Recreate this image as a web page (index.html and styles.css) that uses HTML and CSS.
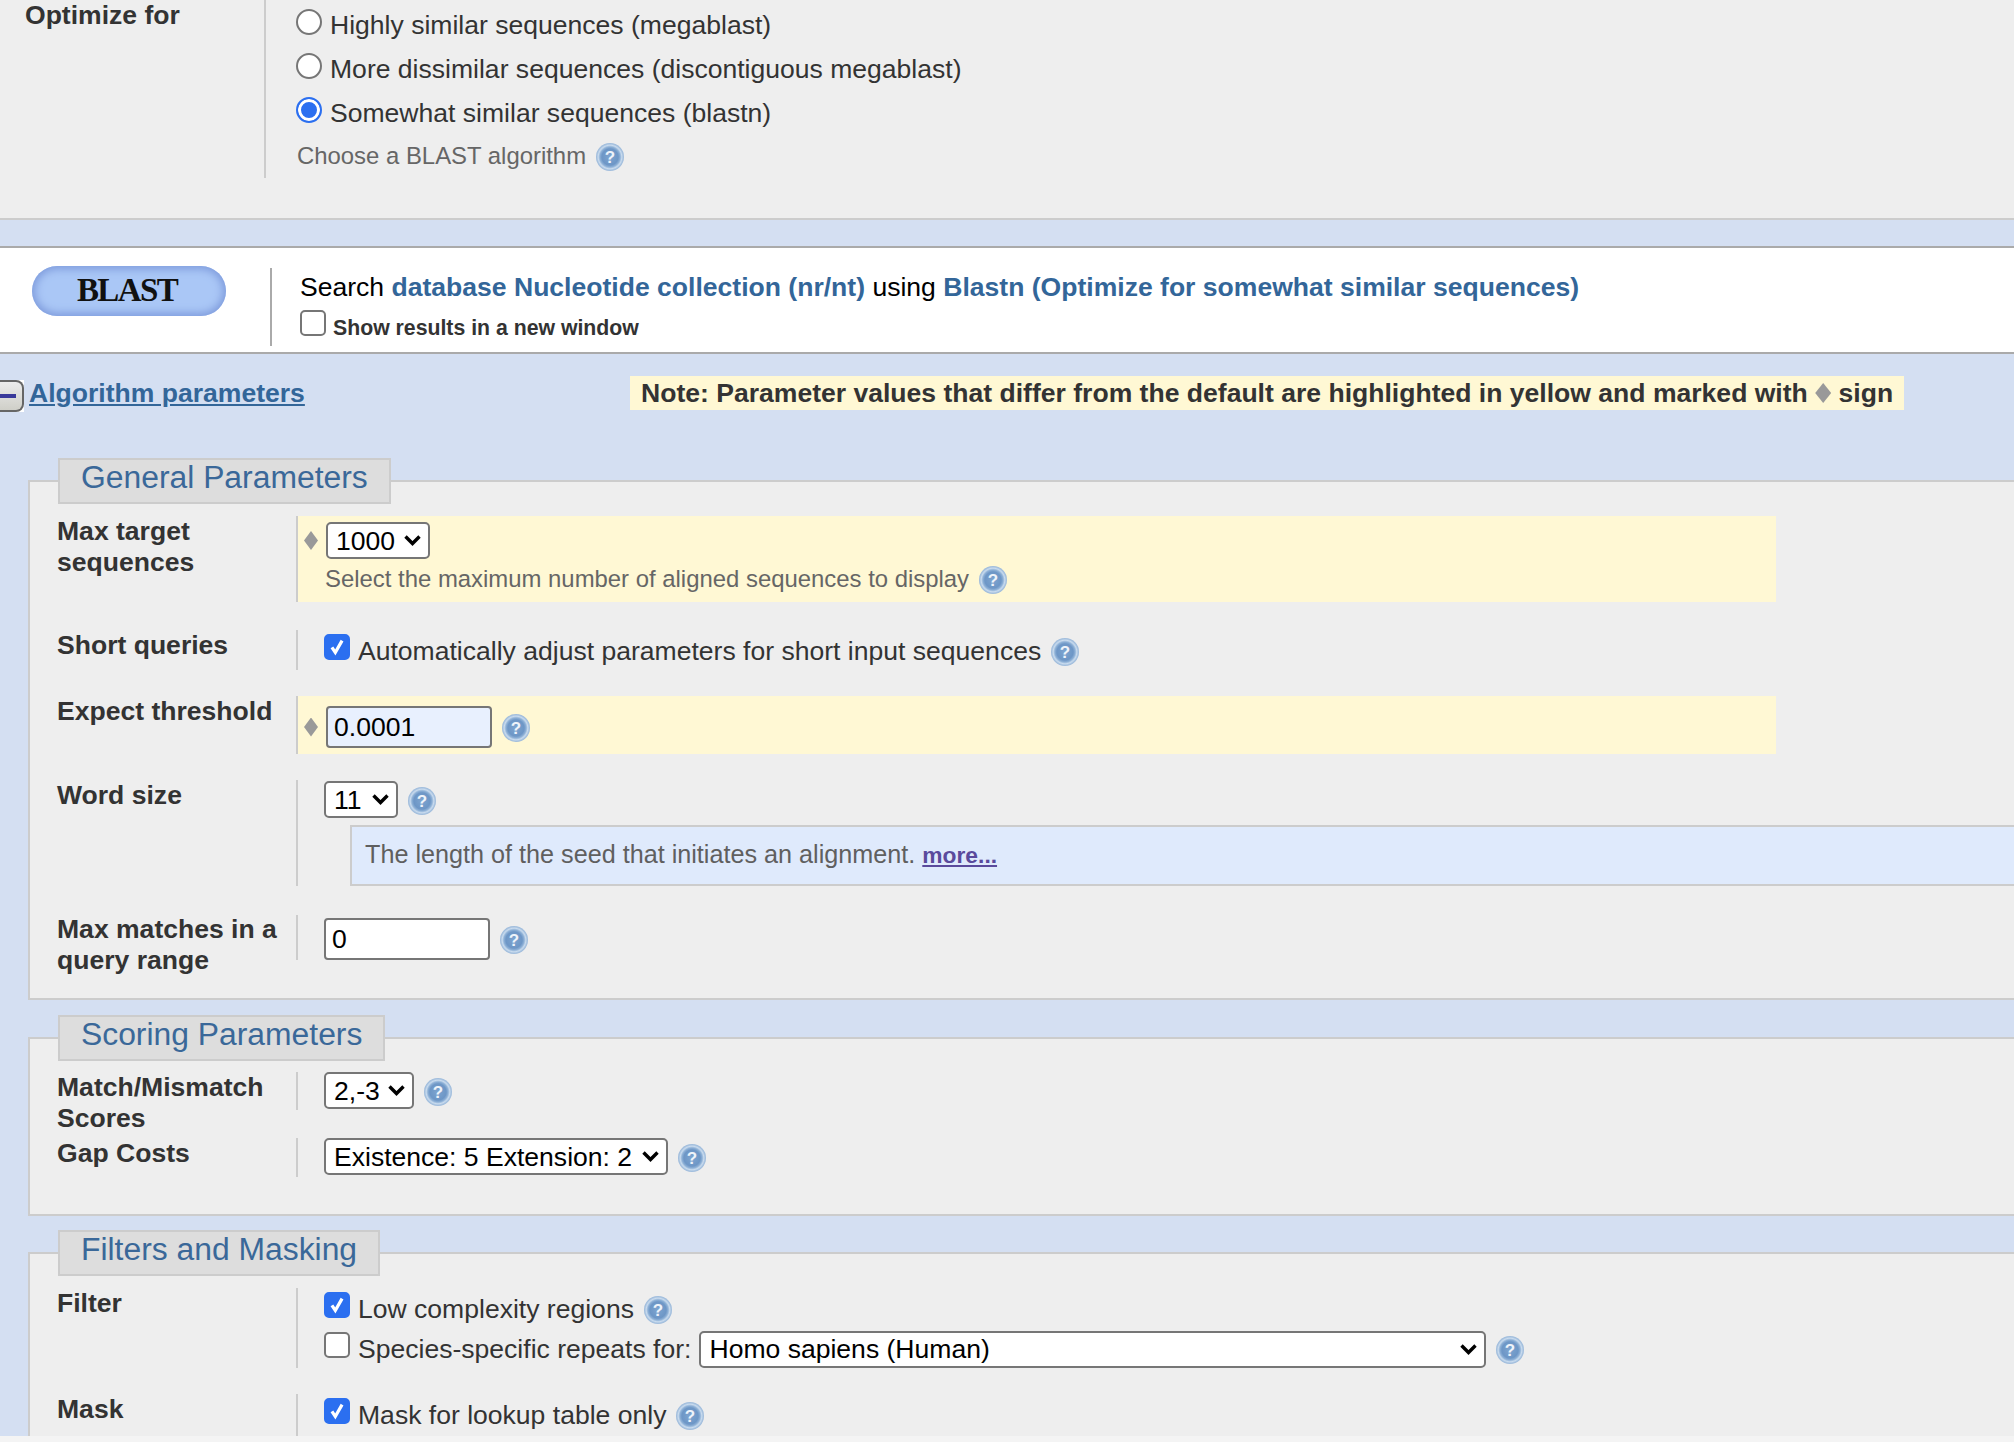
FILE: index.html
```html
<!DOCTYPE html>
<html lang="en">
  <head>
    <meta charset="UTF-8" />
    <title>Standard Nucleotide BLAST</title>
    <link rel="stylesheet" href="styles.css">
  </head>
  <body>
    <svg class="defs" width="0" height="0">
      <defs>
        <radialGradient id="helpFill" cx="50%" cy="50%" r="50%">
          <stop offset="0%" stop-color="#7ea5d0" />
          <stop offset="58%" stop-color="#6d96c6" />
          <stop offset="72%" stop-color="#8db0d6" />
          <stop offset="84%" stop-color="#c9dbee" />
          <stop offset="93%" stop-color="#a8c3e0" />
          <stop offset="100%" stop-color="#9ab8da" />
        </radialGradient>
        <symbol id="help" viewBox="0 0 28 28">
          <circle cx="14" cy="14" r="14" fill="url(#helpFill)" />
          <text x="14" y="20" text-anchor="middle" class="help-mark">?</text>
        </symbol>
      </defs>
    </svg>

    <!-- Program selection -->
    <section class="optimize">
      <div class="opt-label">Optimize for</div>
      <div class="opt-values">
        <label class="radio-line"><input type="radio" name="algo" /> Highly similar sequences (megablast)</label>
        <label class="radio-line"><input type="radio" name="algo" /> More dissimilar sequences (discontiguous megablast)</label>
        <label class="radio-line"><input type="radio" name="algo" checked /> Somewhat similar sequences (blastn)</label>
        <div class="hint opt-hint">Choose a BLAST algorithm <svg class="help"><use href="#help" /></svg></div>
      </div>
    </section>

    <div class="gap-band"></div>

    <!-- Submit bar -->
    <section class="submit-bar">
      <div class="blast-cell"><button class="blast-btn" type="button">BLAST</button></div>
      <div class="submit-text">
        <div class="search-line">Search <b class="blue">database Nucleotide collection (nr/nt)</b> using <b class="blue">Blastn (Optimize for somewhat similar sequences)</b></div>
        <label class="new-window"><input type="checkbox" /> <b>Show results in a new window</b></label>
      </div>
    </section>

    <main class="params">
      <div class="params-head">
        <span class="collapse"><span class="collapse-box"><span class="collapse-bar"></span></span></span>
        <a class="algo-link" href="#">Algorithm parameters</a>
        <div class="note">Note: Parameter values that differ from the default are highlighted in yellow and marked with <span class="diamond"></span> sign</div>
      </div>

      <fieldset class="group group-general">
        <legend>General Parameters</legend>

        <div class="row row-target">
          <div class="row-label">Max target sequences</div>
          <div class="row-value changed">
            <div class="line"><span class="diamond"></span>
              <select class="sel sel-target"><option>1000</option></select>
            </div>
            <div class="hint target-hint">Select the maximum number of aligned sequences to display <svg class="help"><use href="#help" /></svg></div>
          </div>
        </div>

        <div class="row row-short">
          <div class="row-label">Short queries</div>
          <div class="row-value">
            <label class="line check-line"><input type="checkbox" checked /> Automatically adjust parameters for short input sequences <svg class="help"><use href="#help" /></svg></label>
          </div>
        </div>

        <div class="row row-expect">
          <div class="row-label">Expect threshold</div>
          <div class="row-value changed">
            <div class="line"><span class="diamond"></span>
              <input class="num num-changed" type="text" value="0.0001" />
              <svg class="help"><use href="#help" /></svg>
            </div>
          </div>
        </div>

        <div class="row row-word">
          <div class="row-label">Word size</div>
          <div class="row-value">
            <div class="line">
              <select class="sel sel-word"><option>11</option></select>
              <svg class="help"><use href="#help" /></svg>
            </div>
            <div class="info">The length of the seed that initiates an alignment. <a class="more" href="#">more...</a></div>
          </div>
        </div>

        <div class="row row-matches">
          <div class="row-label">Max matches in a query range</div>
          <div class="row-value">
            <div class="line">
              <input class="num" type="text" value="0" />
              <svg class="help"><use href="#help" /></svg>
            </div>
          </div>
        </div>
      </fieldset>

      <fieldset class="group group-scoring">
        <legend>Scoring Parameters</legend>

        <div class="row row-match">
          <div class="row-label">Match/Mismatch Scores</div>
          <div class="row-value">
            <div class="line">
              <select class="sel sel-match"><option>2,-3</option></select>
              <svg class="help"><use href="#help" /></svg>
            </div>
          </div>
        </div>

        <div class="row row-gap">
          <div class="row-label">Gap Costs</div>
          <div class="row-value">
            <div class="line">
              <select class="sel sel-gap"><option>Existence: 5 Extension: 2</option></select>
              <svg class="help"><use href="#help" /></svg>
            </div>
          </div>
        </div>
      </fieldset>

      <fieldset class="group group-filters">
        <legend>Filters and Masking</legend>

        <div class="row row-filter">
          <div class="row-label">Filter</div>
          <div class="row-value">
            <label class="line check-line"><input type="checkbox" checked /> Low complexity regions <svg class="help"><use href="#help" /></svg></label>
            <div class="line check-line">
              <input type="checkbox" /> <span>Species-specific repeats for:</span>
              <select class="sel sel-species"><option>Homo sapiens (Human)</option></select>
              <svg class="help"><use href="#help" /></svg>
            </div>
          </div>
        </div>

        <div class="row row-mask">
          <div class="row-label">Mask</div>
          <div class="row-value">
            <label class="line check-line"><input type="checkbox" checked /> Mask for lookup table only <svg class="help"><use href="#help" /></svg></label>
          </div>
        </div>
      </fieldset>
    </main>

    <div class="bottom-strip"></div>
  </body>
</html>
```

FILE: styles.css
```css
html,
body {
  margin: 0;
  padding: 0;
  height: 1442px;
  overflow: hidden;
}

body {
  position: relative;
  background-color: #d4dff2;
  font-family: "Liberation Sans", Arial, sans-serif;
  font-size: 26.56px;
  color: #333;
}

.defs {
  position: absolute;
}

.help-mark {
  font-family: "Liberation Sans", Arial, sans-serif;
  font-size: 17px;
  font-weight: bold;
  fill: #eef3fa;
}

.help {
  width: 28px;
  height: 28px;
  flex: none;
  margin: 2px 0 0 2px;
}

input[type="checkbox"],
input[type="radio"] {
  appearance: none;
  width: 26px;
  height: 26px;
  margin: 0 0 7px;
  flex: none;
  box-sizing: border-box;
  background-color: #fff;
  border: 2px solid #767676;
}

input[type="checkbox"] {
  border-radius: 5px;
}

input[type="checkbox"]:checked {
  border-color: #2b6ff0;
  background: #2b6ff0 url("data:image/svg+xml,%3Csvg xmlns='http://www.w3.org/2000/svg' viewBox='0 0 26 26'%3E%3Cpath d='M7 13.5l4 6L19 5.5' fill='none' stroke='white' stroke-width='3.8'/%3E%3C/svg%3E") center / 100% 100% no-repeat;
}

input[type="radio"] {
  border-radius: 50%;
}

input[type="radio"]:checked {
  border-color: #2b6ff0;
  background-color: #2b6ff0;
  box-shadow: inset 0 0 0 3px #fff;
}

.hint {
  color: #666;
  font-size: 23.9px;
  display: flex;
  align-items: center;
  gap: 8px;
}

.blue {
  color: #336699;
}

/* top block */
.optimize {
  display: flex;
  height: 218px;
  background-color: #eee;
  border-bottom: 2px solid #ccc;
}

.opt-label {
  width: 239px;
  padding: 0 0 0 25px;
  font-weight: bold;
  line-height: 30px;
}

.opt-values {
  height: 178px;
  padding: 3px 0 0 30px;
  border-left: 2px solid #ccc;
  box-sizing: border-box;
}

.radio-line {
  display: flex;
  align-items: center;
  gap: 8px;
  height: 44px;
}

.opt-hint {
  height: 42px;
  padding-left: 1px;
}

.gap-band {
  height: 26px;
}

/* blast bar */
.submit-bar {
  display: flex;
  height: 104px;
  background-color: #fff;
  border-top: 2px solid #aaa;
  border-bottom: 2px solid #aaa;
}

.blast-cell {
  width: 238px;
  padding: 18px 0 0 32px;
  box-sizing: content-box;
}

.blast-btn {
  display: block;
  width: 194px;
  height: 50px;
  padding: 0 4px 2px 0;
  border: none;
  border-radius: 25px;
  background-color: #aac7f6;
  box-shadow: inset 0 0 9px 3px #7e9bdc;
  font-family: "Liberation Serif", serif;
  font-size: 33px;
  font-weight: bold;
  letter-spacing: -1.6px;
  color: #111;
}

.submit-text {
  height: 78px;
  margin-top: 20px;
  padding-left: 28px;
  border-left: 2px solid #aaa;
}

.search-line {
  margin-top: -1px;
  height: 40px;
  line-height: 40px;
  color: #000;
}

.new-window {
  display: flex;
  align-items: center;
  gap: 7px;
  height: 40px;
  margin-top: 1px;
  font-size: 21.25px;
}

.new-window input {
  margin-bottom: 10px;
}

/* algorithm parameters */
.params {
  padding-left: 28px;
}

.params-head {
  position: relative;
  height: 126px;
}

.collapse {
  position: absolute;
  left: -28px;
  top: 26px;
  width: 24px;
  height: 32px;
  background-color: #fff;
}

.collapse-box {
  display: flex;
  align-items: center;
  height: 100%;
  box-sizing: border-box;
  background: linear-gradient(#ececec, #cfcfc8);
  border: 2px solid #666;
  border-left: none;
  border-radius: 0 8px 8px 0;
}

.collapse-bar {
  width: 16px;
  height: 4px;
  background-color: #3a3a9a;
}

.algo-link {
  position: absolute;
  left: 1px;
  top: 22px;
  line-height: 34px;
  font-weight: bold;
  color: #336699;
}

.note {
  position: absolute;
  left: 602px;
  top: 22px;
  width: 1274px;
  height: 34px;
  line-height: 34px;
  padding-left: 11px;
  box-sizing: border-box;
  font-weight: bold;
  background-color: #fff8d4;
  white-space: nowrap;
}

.diamond {
  display: inline-block;
  width: 14px;
  height: 19px;
  flex: none;
  background-color: #999;
  clip-path: polygon(50% 0, 100% 50%, 50% 100%, 0 50%);
}

.note .diamond {
  width: 16px;
  height: 20px;
  vertical-align: -1px;
}

.group {
  position: relative;
  display: block;
  margin: 0;
  padding: 0;
  min-width: 0;
  background-color: #eee;
  border: none;
  border-left: 2px solid #ccc;
  border-top: 2px solid #ccc;
  border-bottom: 2px solid #ccc;
}

.group legend {
  position: absolute;
  left: 28px;
  top: -24px;
  height: 46px;
  box-sizing: border-box;
  padding: 0 21px;
  line-height: 34px;
  background-color: #ddd;
  border: 2px solid #ccc;
  font-size: 31.85px;
  color: #3a6899;
}

.group-general {
  height: 516px;
}

.group-scoring {
  margin-top: 37px;
  height: 175px;
}

.group-filters {
  margin-top: 36px;
  height: 190px;
}

.row {
  display: flex;
  position: absolute;
  left: 27px;
  right: 0;
}

.row-label {
  width: 239px;
  flex: none;
  font-weight: bold;
  line-height: 31px;
}

.row-value {
  flex: 1;
  border-left: 2px solid #ccc;
  padding-left: 26px;
}

.line {
  display: flex;
  align-items: center;
  gap: 8px;
}

.check-line {
  height: 40px;
  padding-top: 2px;
  box-sizing: border-box;
}

.check-line input[type="checkbox"] {
  margin-bottom: 9px;
}

.changed {
  flex: none;
  width: 1472px;
  padding-left: 6px;
  background-color: #fff8d4;
}

.sel {
  appearance: none;
  height: 37px;
  padding: 0 0 0 8px;
  box-sizing: border-box;
  font-family: "Liberation Sans", Arial, sans-serif;
  font-size: 26.56px;
  color: #000;
  background: #fff url("data:image/svg+xml,%3Csvg xmlns='http://www.w3.org/2000/svg' viewBox='0 0 17 11'%3E%3Cpath d='M1.5 1.5l7 7 7-7' fill='none' stroke='black' stroke-width='3.4'/%3E%3C/svg%3E") right 7px center / 17px 11px no-repeat;
  border: 2px solid #767676;
  border-radius: 5px;
}

.num {
  width: 166px;
  height: 42px;
  padding: 0 6px;
  box-sizing: border-box;
  font-family: "Liberation Sans", Arial, sans-serif;
  font-size: 26.56px;
  color: #000;
  background-color: #fff;
  border: 2px solid #767676;
  border-radius: 4px;
}

.num-changed {
  background-color: #e8f0fe;
}

.row-target { top: 34px; }
.row-target .row-value { height: 86px; }
.row-target .line { padding-top: 6px; }
.sel-target { width: 104px; }
.target-hint { padding-top: 5px; padding-left: 21px; }

.row-short { top: 148px; }
.row-short .row-value { height: 40px; }

.row-expect { top: 214px; }
.row-expect .row-value { height: 58px; }
.row-expect .line { padding-top: 10px; }

.row-word { top: 298px; }
.row-word .row-value { height: 106px; }
.row-word .line { padding-top: 1px; }
.sel-word { width: 74px; }

.info {
  margin: 7px 0 0 26px;
  height: 61px;
  line-height: 54px;
  padding-left: 13px;
  box-sizing: border-box;
  background-color: #dfeafc;
  border-top: 2px solid #ccc;
  border-left: 2px solid #ccc;
  border-bottom: 2px solid #ccc;
  color: #5f5f5f;
  font-size: 25.2px;
}

.more {
  font-weight: bold;
  font-size: 22.8px;
  color: #5a4a9c;
}

.row-matches { top: 433px; }
.row-matches .row-label { margin-top: -1px; }
.row-matches .row-value { height: 45px; }
.row-matches .line { padding-top: 3px; }

.row-match { top: 33px; }
.row-match .row-value { height: 38px; }
.sel-match { width: 90px; }

.row-gap { top: 99px; }
.row-gap .row-value { height: 39px; }
.sel-gap { width: 344px; }

.row-filter { top: 34px; }
.row-filter .row-value { height: 80px; }
.sel-species { width: 787px; }

.row-mask { top: 140px; }
.row-mask .row-value { height: 42px; }

.bottom-strip {
  position: absolute;
  left: 0;
  right: 0;
  bottom: 0;
  height: 6px;
  background-color: #f4f4f4;
}
```
